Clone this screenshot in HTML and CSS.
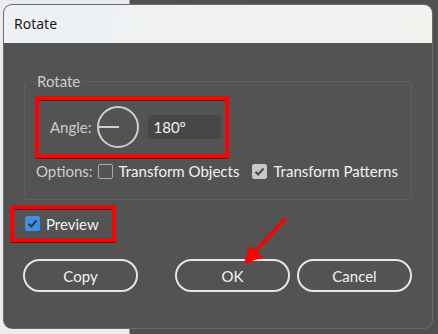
FILE: index.html
```html
<!DOCTYPE html>
<html lang="en">

<head>
  <meta charset="UTF-8">
  <meta name="viewport" content="width=device-width, initial-scale=1.0">
  <title>Rotate</title>
  <link rel="stylesheet" href="styles.css">
</head>

<body>
  <!-- window behind the dialog -->
  <div class="behind"></div>

  <div class="dialog">
    <div class="titlebar">Rotate</div>
    <div class="body">
      <fieldset class="group">
        <legend>Rotate</legend>
        <div class="mark angle-row">
          <span class="label">Angle:</span>
          <svg class="dial" width="42" height="42" viewBox="0 0 42 42">
            <circle cx="21" cy="21" r="20" fill="none" stroke="#cfcfcf" stroke-width="2" />
            <line x1="1" y1="21" x2="22" y2="21" stroke="#cfcfcf" stroke-width="2" />
          </svg>
          <div class="field">180°</div>
        </div>
        <div class="options">
          <span class="label">Options:</span>
          <span class="check"></span>
          <span class="text">Transform Objects</span>
          <span class="check on">
            <svg width="15" height="15" viewBox="0 0 15 15">
              <path d="M3.5 7.8 L6.2 10.5 L11.5 4.5" fill="none" stroke="#4d4d4d" stroke-width="2.2" />
            </svg>
          </span>
          <span class="text">Transform Patterns</span>
        </div>
      </fieldset>

      <div class="mark preview">
        <span class="check blue">
          <svg width="15" height="15" viewBox="0 0 15 15">
            <path d="M3.5 7.8 L6.2 10.5 L11.5 4.5" fill="none" stroke="#2f3b48" stroke-width="2.2" />
          </svg>
        </span>
        <span class="text">Preview</span>
      </div>

      <div class="buttons">
        <button class="btn">Copy</button>
        <div class="right">
          <button class="btn">OK</button>
          <button class="btn">Cancel</button>
        </div>
      </div>
    </div>
  </div>

  <!-- red arrow pointing at OK -->
  <svg class="arrow" width="438" height="334" viewBox="0 0 438 334">
    <line x1="285" y1="219" x2="254" y2="252" stroke="#f00" stroke-width="3.5" stroke-linecap="round" />
    <polygon points="244,264 249,245 263,257" fill="#f00" />
  </svg>
</body>

</html>
```

FILE: styles.css
```css
* {
  margin: 0;
  padding: 0;
  box-sizing: border-box;
}

html,
body {
  height: 100%;
}

body {
  background-color: #505050;
  position: relative;
  overflow: hidden;
  font-family: Lato, "Liberation Sans", sans-serif;
}

.behind {
  position: absolute;
  left: 0;
  top: 0;
  width: 130px;
  height: 100%;
  background-color: #ececec;
  border-right: 1px solid #9a9a9a;
}

.dialog {
  position: relative;
  margin: 5px 0 0 4px;
  width: 428px;
  height: 323px;
  border-radius: 8px;
  overflow: hidden;
  background-color: #535353;
  box-shadow: 0 0 0 1px #6a6a6a;
}

.titlebar {
  height: 38px;
  padding-left: 10px;
  line-height: 38px;
  font-family: "Noto Sans", sans-serif;
  font-size: 14px;
  color: #1b1b1b;
  background: linear-gradient(100deg, #edf1f5, #f3f2ef);
}

.body {
  display: flex;
  flex-direction: column;
  align-items: flex-start;
}

.label {
  color: #cdcdcd;
  font-size: 15px;
}

.text {
  color: #f2f2f2;
  font-size: 15px;
}

.group {
  margin: 28px 0 0 20px;
  width: 388px;
  border: 1px solid #5f5f5f;
  border-radius: 3px;
  padding: 0 0 20px;

  & legend {
    margin-left: 10px;
    padding: 0 2px;
    line-height: 20px;
    font-size: 15px;
    color: #cdcdcd;
  }
}

.mark {
  border: 4px solid #f00;
  box-shadow: 0 1px 0 #2e2e2e, inset 0 1px 0 #2e2e2e;
}

.angle-row {
  margin: 5px 0 0 10px;
  width: 194px;
  height: 62px;
  display: flex;
  align-items: center;
  padding-left: 11px;

  & .dial {
    margin-left: 5px;
  }
}

.field {
  margin-left: 9px;
  width: 73px;
  height: 24px;
  line-height: 24px;
  padding-left: 6px;
  border-radius: 3px;
  background-color: #474747;
  color: #f4f4f4;
  font-size: 15px;
}

.options {
  margin: 5px 0 0 11px;
  height: 16px;
  display: flex;
  align-items: center;

  & .check {
    margin: 0 6px 0 5px;
  }

  & .check.on {
    margin-left: 13px;
  }
}

.check {
  width: 15px;
  height: 15px;
  border: 1px solid #a9a9a9;
  border-radius: 2px;
  display: flex;
  align-items: center;
  justify-content: center;

  &.on {
    background-color: #c8c8c8;
    border-color: #c8c8c8;
  }

  &.blue {
    background-color: #3d8ee6;
    border-color: #3d8ee6;
  }

  & svg {
    display: block;
    flex: none;
  }
}

.preview {
  margin: 5px 0 0 6px;
  width: 106px;
  height: 37px;
  display: flex;
  align-items: center;
  padding-left: 11px;

  & .check {
    margin-right: 6px;
  }
}

.buttons {
  margin-top: 17px;
  width: 100%;
  padding: 0 20px 0 19px;
  display: flex;
  justify-content: space-between;

  & .right {
    display: flex;
    gap: 7px;
  }
}

.btn {
  width: 115px;
  height: 33px;
  border: 2px solid #e6e6e6;
  border-radius: 17px;
  background-color: transparent;
  color: #f2f2f2;
  font-family: Lato, "Liberation Sans", sans-serif;
  font-size: 15px;
}

.arrow {
  position: absolute;
  left: 0;
  top: 0;
  pointer-events: none;
}
```
